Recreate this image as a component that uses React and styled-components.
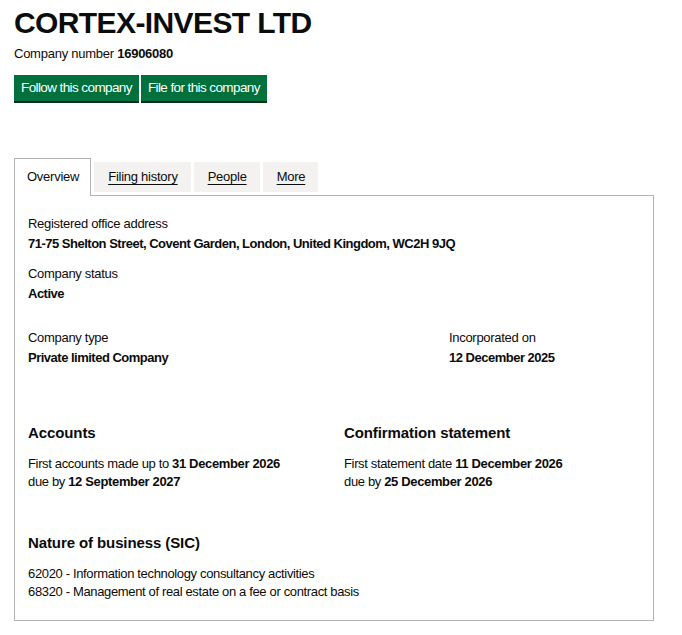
import styled, { createGlobalStyle } from "styled-components";

const GlobalStyle = createGlobalStyle`
  html, body {
    margin: 0;
    padding: 0;
    background: #ffffff;
  }
  body {
    font-family: "Liberation Sans", Arial, sans-serif;
    color: #0b0c0c;
  }
  * {
    box-sizing: border-box;
  }
`;

const Page = styled.div`
  padding: 7px 28px 20px 14px;
`;

const Title = styled.h1`
  margin: 0;
  font-size: 30px;
  line-height: 32px;
  font-weight: 700;
  letter-spacing: -0.6px;
`;

const CompanyNumber = styled.p`
  margin: 7px 0 0;
  font-size: 13px;
  line-height: 16px;
  letter-spacing: -0.25px;
  strong {
    font-weight: 700;
  }
`;

const ButtonRow = styled.div`
  display: flex;
  gap: 2px;
  margin-top: 13px;
`;

const Button = styled.a`
  display: inline-block;
  padding: 5px 7px;
  font-size: 13.5px;
  line-height: 16px;
  letter-spacing: -0.6px;
  color: #ffffff;
  background-color: #00703c;
  box-shadow: 0 2px 0 #002d18;
  text-decoration: none;
  cursor: pointer;
`;

const TabList = styled.div`
  display: flex;
  align-items: flex-end;
  gap: 3px;
  margin-top: 57px;
  position: relative;
  z-index: 1;
`;

const Tab = styled.a`
  display: block;
  font-size: 13px;
  line-height: 16px;
  letter-spacing: -0.25px;
  color: #0b0c0c;
  cursor: pointer;
  padding: ${(p) => (p.$active ? "10px 11px 11px 12px" : "7px 13px 7px 14px")};
  margin-bottom: ${(p) => (p.$active ? "-1px" : "3px")};
  background: ${(p) => (p.$active ? "#ffffff" : "#f3f2f1")};
  border: ${(p) => (p.$active ? "1px solid #b1b4b6" : "none")};
  border-bottom: none;
  text-decoration: ${(p) => (p.$active ? "none" : "underline")};
  text-underline-offset: 3px;
  text-decoration-thickness: 1px;
`;

const Panel = styled.div`
  border: 1px solid #b1b4b6;
  padding: 18px 13px 20px;
`;

const Field = styled.div`
  margin-bottom: ${(p) => p.$gap || 0}px;
`;

const Label = styled.div`
  font-size: 13px;
  line-height: 20px;
  letter-spacing: -0.3px;
`;

const Value = styled.div`
  font-size: 13px;
  line-height: 20px;
  font-weight: 700;
  letter-spacing: -0.5px;
`;

const Row = styled.div`
  display: grid;
  grid-template-columns: ${(p) => p.$first}px 1fr;
  margin-top: ${(p) => p.$top || 0}px;
`;

const Section = styled.div`
  margin-top: ${(p) => p.$top || 0}px;
`;

const SectionHeading = styled.h2`
  margin: 0 0 12px;
  font-size: 15px;
  line-height: 20px;
  font-weight: 700;
  letter-spacing: -0.1px;
`;

const Para = styled.p`
  margin: 0;
  font-size: 13px;
  line-height: 17.5px;
  letter-spacing: -0.35px;
  strong {
    font-weight: 700;
  }
`;

const App = () => {
  return (
    <>
      <GlobalStyle />
      <Page>
        <Title>CORTEX-INVEST LTD</Title>
        <CompanyNumber>
          Company number <strong>16906080</strong>
        </CompanyNumber>
        <ButtonRow>
          <Button>Follow this company</Button>
          <Button>File for this company</Button>
        </ButtonRow>

        <TabList>
          <Tab $active>Overview</Tab>
          <Tab>Filing history</Tab>
          <Tab>People</Tab>
          <Tab>More</Tab>
        </TabList>

        <Panel>
          <Field $gap={10}>
            <Label>Registered office address</Label>
            <Value>71-75 Shelton Street, Covent Garden, London, United Kingdom, WC2H 9JQ</Value>
          </Field>
          <Field>
            <Label>Company status</Label>
            <Value>Active</Value>
          </Field>

          <Row $first={421} $top={24}>
            <Field>
              <Label>Company type</Label>
              <Value>Private limited Company</Value>
            </Field>
            <Field>
              <Label>Incorporated on</Label>
              <Value>12 December 2025</Value>
            </Field>
          </Row>

          <Row $first={316} $top={55}>
            <div>
              <SectionHeading>Accounts</SectionHeading>
              <Para>
                First accounts made up to <strong>31 December 2026</strong>
                <br />
                due by <strong>12 September 2027</strong>
              </Para>
            </div>
            <div>
              <SectionHeading>Confirmation statement</SectionHeading>
              <Para>
                First statement date <strong>11 December 2026</strong>
                <br />
                due by <strong>25 December 2026</strong>
              </Para>
            </div>
          </Row>

          <Section $top={43}>
            <SectionHeading>Nature of business (SIC)</SectionHeading>
            <Para>
              62020 - Information technology consultancy activities
              <br />
              68320 - Management of real estate on a fee or contract basis
            </Para>
          </Section>
        </Panel>
      </Page>
    </>
  );
};

export default App;
